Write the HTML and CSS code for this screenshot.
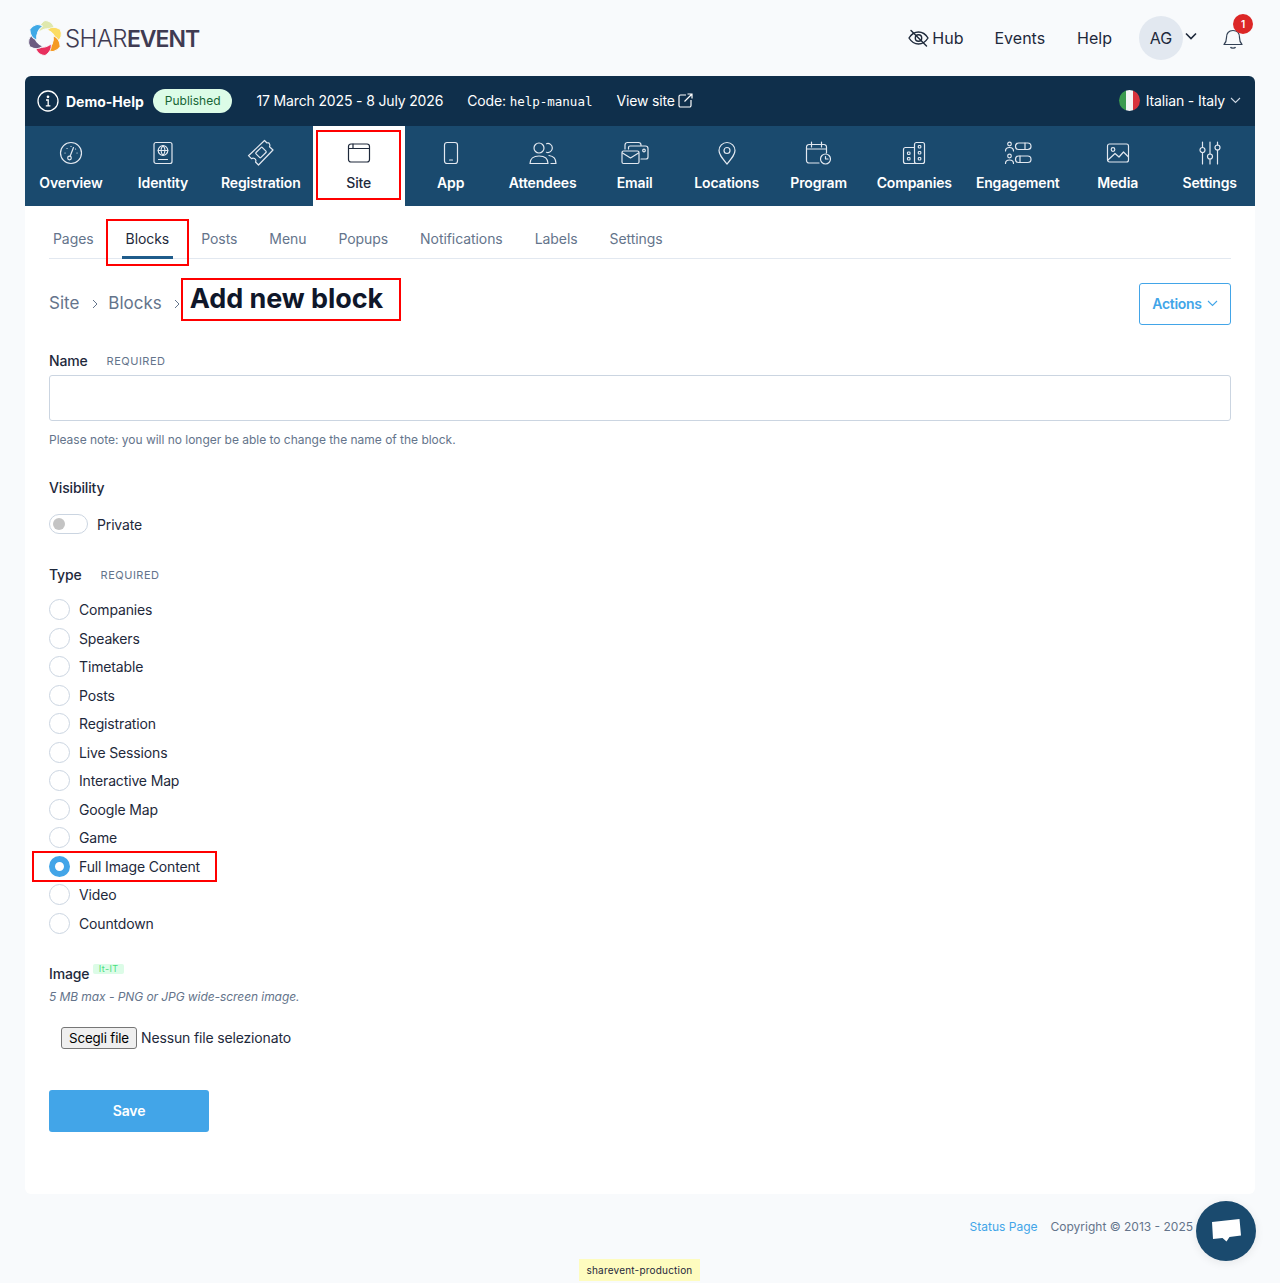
FILE: index.html
```html
<!DOCTYPE html>
<html lang="en">
<head>
  <meta charset="UTF-8" />
  <meta name="viewport" content="width=device-width, initial-scale=1.0" />
  <title>Add new block | ShareEvent</title>
  <link rel="stylesheet" href="styles.css">
</head>
<body>
<header class="site-header">
  <a class="logo" href="#">
    <svg class="logo-mark" viewBox="-18 -18 36 36" width="36" height="36" stroke="#f8fafc" stroke-width=".9">
      <path fill="#dfe8ad" d="M-6 -6C-7 -11 -4 -15 0 -17.500C6 -17 9.500 -13 9 -8C4 -10 -1 -10 -6 -6Z"/>
      <path fill="#fbdc63" transform="rotate(60)" d="M-6 -6C-7 -11 -4 -15 0 -17.500C6 -17 9.500 -13 9 -8C4 -10 -1 -10 -6 -6Z"/>
      <path fill="#f59a23" transform="rotate(120)" d="M-6 -6C-7 -11 -4 -15 0 -17.500C6 -17 9.500 -13 9 -8C4 -10 -1 -10 -6 -6Z"/>
      <path fill="#e8305e" transform="rotate(180)" d="M-6 -6C-7 -11 -4 -15 0 -17.500C6 -17 9.500 -13 9 -8C4 -10 -1 -10 -6 -6Z"/>
      <path fill="#6b5b80" transform="rotate(240)" d="M-6 -6C-7 -11 -4 -15 0 -17.500C6 -17 9.500 -13 9 -8C4 -10 -1 -10 -6 -6Z"/>
      <path fill="#3fa9e6" transform="rotate(300)" d="M-6 -6C-7 -11 -4 -15 0 -17.500C6 -17 9.500 -13 9 -8C4 -10 -1 -10 -6 -6Z"/>
    </svg>
    <span class="logo-text">SHAR<b>EVENT</b></span>
  </a>
  <nav class="user-nav">
    <a href="#" class="hub">
      <svg width="21" height="18" viewBox="0 0 21 18" fill="none" stroke="#1e293b" stroke-width="1.400" stroke-linecap="round"><path d="M1 9c2.500-4 5.800-6 9.500-6s7 2 9.500 6c-2.500 4-5.800 6-9.500 6S3.500 13 1 9z"/><circle cx="10.500" cy="9" r="3.200"/><path d="M3 1.500 18.500 17"/></svg>
      Hub
    </a>
    <a href="#">Events</a>
    <a href="#">Help</a>
    <span class="avatar">AG</span>
    <svg class="avatar-caret" width="12" height="8" viewBox="0 0 12 8" fill="none" stroke="#1e293b" stroke-width="1.600"><path d="M1 1.500 6 6.500l5-5"/></svg>
    <span class="bell">
      <svg width="20" height="24" viewBox="0 0 20 24" fill="none" stroke="#334155" stroke-width="1.200" stroke-linejoin="round"><path d="M1 18.500c2-2 2.500-3.500 2.500-7C3.500 7 6 4.500 10 4.500s6.500 2.500 6.500 7c0 3.500.5 5 2.500 7z"/><path d="M7.500 21c.5 1.500 4.500 1.500 5 0"/></svg>
      <span class="bell-count">1</span>
    </span>
  </nav>
</header>

<main class="card">
  <div class="event-bar">
    <svg class="info-icon" width="22" height="22" viewBox="0 0 22 22" fill="none" stroke="#fff" stroke-width="1.300"><circle cx="11" cy="11" r="10"/><path d="M9 10h2.200v5.500M8.800 15.800h4.600"/><circle cx="11" cy="6.800" r=".7" fill="#fff"/></svg>
    <strong class="event-name">Demo-Help</strong>
    <span class="pill">Published</span>
    <span class="event-dates">17 March 2025 - 8 July 2026</span>
    <span class="event-code">Code: <code>help-manual</code></span>
    <a class="view-site" href="#">View site
      <svg width="15" height="15" viewBox="0 0 15 15" fill="none" stroke="#fff" stroke-width="1.200"><path d="M8 2H2.500A1.500 1.500 0 0 0 1 3.500v9A1.500 1.500 0 0 0 2.500 14h9a1.500 1.500 0 0 0 1.500-1.500V7M6.500 8.500 14 1M9.500 1H14v4.500"/></svg>
    </a>
    <span class="language">
      <span class="flag"></span>
      Italian - Italy
      <svg width="11" height="7" viewBox="0 0 11 7" fill="none" stroke="#cbd5e1" stroke-width="1.100"><path d="M1 1l4.500 4.500L10 1"/></svg>
    </span>
  </div>

  <nav class="main-nav">
    <a href="#">
      <svg viewBox="0 0 24 24"><circle cx="12" cy="12" r="10.500"/><path d="M11 15.500 14.500 6.500"/><circle cx="10.500" cy="17" r="1.800"/><path d="M6 12h.1M8 7.500h.1M12 5.500h.1M18 12h.1M16.500 8h.1"/></svg>
      Overview
    </a>
    <a href="#">
      <svg viewBox="0 0 24 24"><rect x="3" y="1.500" width="18" height="21" rx="2"/><circle cx="12" cy="9.500" r="4.800"/><path d="M7.200 9.500h9.600M12 4.700c-2.500 2.800-2.500 6.800 0 9.600M12 4.700c2.500 2.800 2.500 6.800 0 9.600M7.500 18.500h9"/></svg>
      Identity
    </a>
    <a href="#">
      <svg class="big" viewBox="0 0 28 28"><path d="M17.500 1.500 20 4c1-.6 2.200 0 2.500.9.500 1 .6 1.800 0 2.800l3.500 3.300L11.500 26l-3-3c1-1.500 0-3-1-3.500-1-.5-2-.5-3 .2l-3-3z"/><rect x="9.500" y="10" width="9" height="7" rx="1" transform="rotate(-45 14 13.500)"/></svg>
      Registration
    </a>
    <a href="#" class="active">
      <svg viewBox="0 0 24 24"><rect x="1.500" y="3" width="21" height="18" rx="2.500"/><path d="M1.500 7.500h21M6 3v4.500"/></svg>
      Site
      <span class="mark"></span>
    </a>
    <a href="#">
      <svg viewBox="0 0 24 24"><rect x="5.500" y="1.500" width="13" height="21" rx="2.500"/><path d="M10.500 19h3"/></svg>
      App
    </a>
    <a href="#">
      <svg class="wide" viewBox="0 0 28 24"><circle cx="10" cy="7" r="5"/><path d="M17.500 2.700a4.500 4.500 0 1 1 0 8.600M1 22.500c0-5 3.500-7.500 9-7.500s9 2.500 9 7.500zM20 14.500c4 .5 7 3 7 8h-5"/></svg>
      Attendees
    </a>
    <a href="#">
      <svg class="wide" viewBox="0 0 28 24"><path d="M4 8V4a2.500 2.500 0 0 1 2.500-2.500h11A2.500 2.500 0 0 1 20 4M7.500 8V6.500A1.500 1.500 0 0 1 9 5h15.500A2.500 2.500 0 0 1 27 7.500V16a2 2 0 0 1-2 2h-5"/><rect x="1" y="10" width="17" height="12.500" rx="1.500"/><path d="m1.500 12 8 5 8-5"/><circle cx="23" cy="9.500" r="1.300"/></svg>
      Email
    </a>
    <a href="#">
      <svg viewBox="0 0 24 24"><path d="M12 23C7 17 4 13.500 4 9.500a8 8 0 0 1 16 0c0 4-3 7.500-8 13.500z"/><circle cx="12" cy="9.500" r="3"/></svg>
      Locations
    </a>
    <a href="#">
      <svg class="wide" viewBox="0 0 28 24"><path d="M14 22H4a2.500 2.500 0 0 1-2.500-2.500V6A2.500 2.500 0 0 1 4 3.500h15A2.500 2.500 0 0 1 21.500 6v6M1.500 8h20M6.500 1v5M16.500 1v5"/><circle cx="20.500" cy="18" r="5"/><path d="M20.500 15.500V18h2.500"/></svg>
      Program
    </a>
    <a href="#">
      <svg viewBox="0 0 24 24"><rect x="12.500" y="1.500" width="10" height="21" rx="2"/><path d="M12.500 6.500H3.500a2 2 0 0 0-2 2V20.500a2 2 0 0 0 2 2h9"/><rect x="16.300" y="4.500" width="2.500" height="2.500" rx=".8"/><rect x="16.300" y="10.500" width="2.500" height="2.500" rx=".8"/><rect x="16.300" y="16.500" width="2.500" height="2.500" rx=".8"/><rect x="5.500" y="11" width="2.500" height="2.500" rx=".8"/><rect x="5.500" y="16.500" width="2.500" height="2.500" rx=".8"/></svg>
      Companies
    </a>
    <a href="#">
      <svg class="wide" viewBox="0 0 28 24"><circle cx="5.500" cy="3" r="1.800"/><path d="M1.500 10c0-2.500 1.500-3.500 4-3.500s4 1 4 3.500"/><circle cx="5.500" cy="15" r="1.800"/><path d="M1.500 22.500c0-2.500 1.500-3.500 4-3.500s4 1 4 3.500"/><rect x="11.500" y="2" width="15.500" height="6.500" rx="3.250"/><path d="M21 2v6.500"/><rect x="11.500" y="15" width="15.500" height="6.500" rx="3.250"/><path d="M16 15v6.500"/></svg>
      Engagement
    </a>
    <a href="#">
      <svg viewBox="0 0 24 24"><rect x="1.500" y="3" width="21" height="18" rx="2"/><circle cx="7" cy="8.500" r="1.800"/><path d="m2 19 7-6.500 4 3.500 4.500-5 5 5"/></svg>
      Media
    </a>
    <a href="#">
      <svg viewBox="0 0 24 24"><path d="M4.500 1v5.500M4.500 11.500V23M12 1v12M12 18v5M19.500 1v3M19.500 9v14"/><circle cx="4.500" cy="9" r="2.500"/><circle cx="12" cy="15.500" r="2.500"/><circle cx="19.500" cy="6.500" r="2.500"/></svg>
      Settings
    </a>
  </nav>

  <div class="content">
    <div class="tabs">
      <a href="#">Pages</a>
      <a href="#" class="active">Blocks<span class="mark"></span></a>
      <a href="#">Posts</a>
      <a href="#">Menu</a>
      <a href="#">Popups</a>
      <a href="#">Notifications</a>
      <a href="#">Labels</a>
      <a href="#">Settings</a>
    </div>

    <div class="title-row">
      <a class="crumb" href="#">Site</a>
      <svg class="crumb-sep" width="6" height="10" viewBox="0 0 6 10" fill="none" stroke="#64748b" stroke-width="1"><path d="m1 1 4 4-4 4"/></svg>
      <a class="crumb" href="#">Blocks</a>
      <svg class="crumb-sep last" width="6" height="10" viewBox="0 0 6 10" fill="none" stroke="#64748b" stroke-width="1"><path d="m1 1 4 4-4 4"/></svg>
      <h1>Add new block<span class="mark"></span></h1>
      <button type="button" class="actions">Actions
        <svg width="11" height="7" viewBox="0 0 11 7" fill="none" stroke="#42a5e8" stroke-width="1.100"><path d="M1 1l4.500 4.500L10 1"/></svg>
      </button>
    </div>

    <form class="block-form">
      <div class="label-row name-label"><label>Name</label><span class="required">REQUIRED</span></div>
      <input type="text" class="text-input">
      <p class="help">Please note: you will no longer be able to change the name of the block.</p>

      <div class="label-row visibility-label"><label>Visibility</label></div>
      <div class="toggle-row">
        <span class="toggle"></span>
        <span>Private</span>
      </div>

      <div class="label-row type-label"><label>Type</label><span class="required">REQUIRED</span></div>
      <div class="radios">
        <div class="radio-row"><span class="radio"></span>Companies</div>
        <div class="radio-row"><span class="radio"></span>Speakers</div>
        <div class="radio-row"><span class="radio"></span>Timetable</div>
        <div class="radio-row"><span class="radio"></span>Posts</div>
        <div class="radio-row"><span class="radio"></span>Registration</div>
        <div class="radio-row"><span class="radio"></span>Live Sessions</div>
        <div class="radio-row"><span class="radio"></span>Interactive Map</div>
        <div class="radio-row"><span class="radio"></span>Google Map</div>
        <div class="radio-row"><span class="radio"></span>Game</div>
        <div class="radio-row selected"><span class="radio"></span>Full Image Content<span class="mark"></span></div>
        <div class="radio-row"><span class="radio"></span>Video</div>
        <div class="radio-row"><span class="radio"></span>Countdown</div>
      </div>

      <div class="label-row image-label"><label>Image</label><span class="locale">It-IT</span></div>
      <p class="hint">5 MB max - PNG or JPG wide-screen image.</p>
      <div class="file-row">
        <button type="button" class="file-button">Scegli file</button>
        <span>Nessun file selezionato</span>
      </div>

      <button type="button" class="save">Save</button>
    </form>
  </div>
</main>

<footer class="site-footer">
  <a href="#">Status Page</a>
  <span>Copyright © 2013 - 2025</span>
</footer>

<button type="button" class="chat-button" aria-label="Chat">
  <svg width="30" height="26" viewBox="0 0 30 26"><path fill="#fff" d="M1 4 28.500 1 30 17.500 18.500 19 15.500 23.500 11.500 20 2 21z"/></svg>
</button>
<div class="env-tag">sharevent-production</div>
</body>
</html>
```

FILE: styles.css
```css
* {
  box-sizing: border-box;
}
body {
  margin: 0;
  font-family: Inter, "Noto Sans", sans-serif;
  font-size: 14px;
  letter-spacing: -0.15px;
  color: #0f172a;
  background-color: #f8fafc;
  min-height: 1283px;
}
a {
  color: inherit;
  text-decoration: none;
}

/* top header */
.site-header {
  height: 76px;
  padding: 0 24px 0 27px;
  display: flex;
  justify-content: space-between;
  align-items: center;
}
.logo {
  display: flex;
  align-items: center;
  gap: 2px;
}
.logo-text {
  font-size: 24px;
  font-weight: 300;
  letter-spacing: -0.6px;
  color: #3f3b52;
}
.logo-text b {
  font-size: 23px;
  font-weight: 600;
  letter-spacing: -1px;
}
.user-nav {
  display: flex;
  align-items: center;
  font-size: 16px;
  letter-spacing: 0;
  color: #1e293b;
}
.user-nav a {
  margin-right: 32px;
}
.user-nav .hub {
  display: flex;
  align-items: center;
  gap: 3px;
  margin-right: 31px;
}
.avatar {
  width: 44px;
  height: 44px;
  margin-left: -5px;
  border-radius: 50%;
  background-color: #e2e8f0;
  display: flex;
  align-items: center;
  justify-content: center;
}
.avatar-caret {
  margin: -4px 0 0 2px;
}
.bell {
  position: relative;
  display: block;
  margin: 0 13px 0 26px;
  height: 24px;
}
.bell-count {
  position: absolute;
  top: -12px;
  left: 10px;
  width: 20px;
  height: 20px;
  border-radius: 50%;
  background-color: #dc2626;
  color: #fff;
  font-size: 10px;
  font-weight: 600;
  display: flex;
  align-items: center;
  justify-content: center;
}

/* main card */
.card {
  margin: 0 25px;
  height: 1118px;
  background-color: #fff;
  border-radius: 6px;
  overflow: hidden;
}
.event-bar {
  height: 50px;
  padding: 0 14px 0 12px;
  background-color: #0f2f4b;
  color: #fff;
  display: flex;
  align-items: center;
}
.event-name {
  margin-left: 7px;
  font-weight: 700;
  letter-spacing: 0;
}
.pill {
  margin-left: 9px;
  height: 24px;
  padding: 0 12px;
  border-radius: 12px;
  background-color: #dcfce7;
  color: #166534;
  font-size: 12px;
  letter-spacing: 0;
  line-height: 24px;
}
.event-dates,
.event-code {
  margin: -2px 0 0 24px;
}
.event-code code {
  font-family: "DejaVu Sans Mono", monospace;
  font-size: 12.5px;
  letter-spacing: 0;
}
.view-site {
  margin: -2px 0 0 24px;
  display: flex;
  align-items: center;
  gap: 3px;
}
.language {
  margin: -2px 0 0 auto;
  display: flex;
  align-items: center;
  gap: 6px;
}
.language svg {
  margin-left: -1px;
}
.flag {
  width: 21px;
  height: 21px;
  border-radius: 50%;
  background: linear-gradient(90deg, #3c9a4e 0 33%, #f4f4f4 33% 66%, #d8323c 66%);
}
.main-nav {
  height: 80px;
  background-color: #1a4a6e;
  display: flex;
}
.main-nav a {
  position: relative;
  min-width: 92px;
  padding: 15px 12px 0;
  flex: 0 0 auto;
  color: #fff;
  font-weight: 600;
  font-size: 14px;
  letter-spacing: -0.15px;
  line-height: 18px;
  text-align: center;
  white-space: nowrap;
}
.main-nav svg {
  display: block;
  width: 24px;
  height: 24px;
  margin: 0 auto 9px;
  fill: none;
  stroke: #e2e8f0;
  stroke-width: 1.200;
  stroke-linecap: round;
  stroke-linejoin: round;
}
.main-nav svg.wide {
  width: 28px;
}
.main-nav svg.big {
  width: 28px;
  height: 28px;
  margin: -2px auto 7px;
}
.main-nav a.active {
  background-color: #fff;
  color: #1e293b;
  font-weight: 500;
}
.main-nav a.active svg {
  stroke: #1e293b;
}
.mark {
  position: absolute;
  border: 2px solid #f00;
  pointer-events: none;
}
.main-nav .mark {
  left: 3px;
  right: 4px;
  top: 4px;
  bottom: 6px;
}

/* page content */
.content {
  padding: 0 24px;
}
.tabs {
  height: 53px;
  display: flex;
  gap: 24px;
  border-bottom: 1px solid #e2e8f0;
  color: #64748b;
  letter-spacing: -0.07px;
}
.tabs a {
  position: relative;
  padding: 24px 4px 0;
  line-height: 17px;
}
.tabs a.active {
  color: #1e293b;
  border-bottom: 3px solid #1f5c8b;
  margin-bottom: -1px;
}
.tabs .mark {
  left: -16px;
  right: -16px;
  top: 13px;
  bottom: -10px;
}
.title-row {
  height: 42px;
  margin-top: 24px;
  display: flex;
  align-items: center;
  letter-spacing: 0;
}
.crumb {
  font-size: 17px;
  color: #64748b;
  margin-top: -2px;
}
.crumb-sep {
  margin: 0 10px 0 13px;
}
.crumb-sep.last {
  margin: 0 10px 0 12px;
}
h1 {
  position: relative;
  margin: -10px 0 0;
  font-size: 27px;
  font-weight: 700;
  letter-spacing: -0.08px;
  line-height: 34px;
  color: #0f172a;
}
h1 .mark {
  left: -9px;
  right: -18px;
  top: -4px;
  bottom: -5px;
}
.actions {
  margin-left: auto;
  width: 92px;
  height: 42px;
  padding: 0 0 2px;
  background: #fff;
  border: 1px solid #42a5e8;
  border-radius: 3px;
  color: #42a5e8;
  font: 600 14px Inter, sans-serif;
  letter-spacing: -0.3px;
  display: flex;
  align-items: center;
  justify-content: center;
  gap: 5px;
}

/* form */
.label-row {
  display: flex;
  align-items: center;
  line-height: 20px;
  font-weight: 500;
  color: #1e293b;
}
.required {
  margin-left: 19px;
  font-size: 11px;
  font-weight: 400;
  letter-spacing: 0.5px;
  color: #64748b;
}
.name-label {
  margin-top: 26px;
}
.text-input {
  display: block;
  width: 100%;
  height: 46px;
  margin-top: 4px;
  border: 1px solid #cbd5e1;
  border-radius: 3px;
  background: #fff;
}
.help {
  margin: 11px 0 0;
  font-size: 12px;
  letter-spacing: -0.02px;
  line-height: 15px;
  color: #64748b;
}
.visibility-label {
  margin-top: 31px;
}
.toggle-row {
  margin-top: 16px;
  display: flex;
  align-items: center;
  gap: 9px;
  height: 20px;
  color: #1e293b;
}
.toggle {
  position: relative;
  width: 39px;
  height: 20px;
  border: 1px solid #cbd5e1;
  border-radius: 10px;
  background: #fff;
}
.toggle::after {
  content: "";
  position: absolute;
  left: 3px;
  top: 3px;
  width: 12px;
  height: 12px;
  border-radius: 50%;
  background-color: #c4c4c4;
}
.type-label {
  margin-top: 31px;
}
.radios {
  margin-top: 10.7px;
}
.radio-row {
  position: relative;
  display: flex;
  align-items: center;
  gap: 9px;
  height: 28.5px;
  color: #1e293b;
  width: max-content;
}
.radio {
  width: 21px;
  height: 21px;
  border: 1px solid #cbd5e1;
  border-radius: 50%;
  background: #fff;
}
.radio-row.selected .radio {
  border: 6px solid #42a5e8;
}
.radio-row .mark {
  left: -17px;
  right: -17px;
  top: -1px;
  bottom: -1px;
}
.image-label {
  margin-top: 26.3px;
  align-items: flex-start;
}
.locale {
  margin: 0 0 0 4px;
  padding: 0 5.5px;
  height: 10px;
  line-height: 10px;
  border-radius: 2px;
  background-color: #dcfce7;
  color: #4ade80;
  font-size: 9px;
  font-weight: 400;
  letter-spacing: 0.4px;
}
.hint {
  margin: 5px 0 0;
  font-size: 12px;
  letter-spacing: -0.07px;
  line-height: 15px;
  font-style: italic;
  color: #64748b;
}
.file-row {
  margin: 23px 0 0 12px;
  display: flex;
  align-items: center;
  gap: 4px;
  color: #1e293b;
}
.file-button {
  width: 76px;
  height: 22px;
  padding: 0;
  background-color: #efefef;
  border: 1px solid #767676;
  border-radius: 3px;
  color: #000;
  font: 400 13.33px Inter, sans-serif;
  letter-spacing: -0.15px;
}
.save {
  display: block;
  margin-top: 41px;
  width: 160px;
  height: 42px;
  padding: 0 0 1px;
  border: none;
  border-radius: 3px;
  background-color: #42a5e8;
  color: #fff;
  font: 600 14px Inter, sans-serif;
  letter-spacing: -0.15px;
}

/* footer */
.site-footer {
  padding: 25px 87px 0 0;
  display: flex;
  justify-content: flex-end;
  gap: 13px;
  font-size: 12px;
  letter-spacing: 0;
  line-height: 16px;
  color: #64748b;
}
.site-footer a {
  color: #42a5e8;
}
.chat-button {
  position: fixed;
  left: 1196px;
  top: 1201px;
  width: 60px;
  height: 60px;
  padding: 0;
  border: none;
  border-radius: 50%;
  background-color: #1a4a6e;
  box-shadow: 0 2px 10px rgba(0,0,0,0.08);
  display: flex;
  align-items: center;
  justify-content: center;
}
.env-tag {
  position: fixed;
  left: 579px;
  top: 1259px;
  width: 121px;
  height: 22px;
  background-color: #fefcbf;
  color: #1e293b;
  font-size: 10px;
  line-height: 22px;
  text-align: center;
  letter-spacing: 0.2px;
}
```
